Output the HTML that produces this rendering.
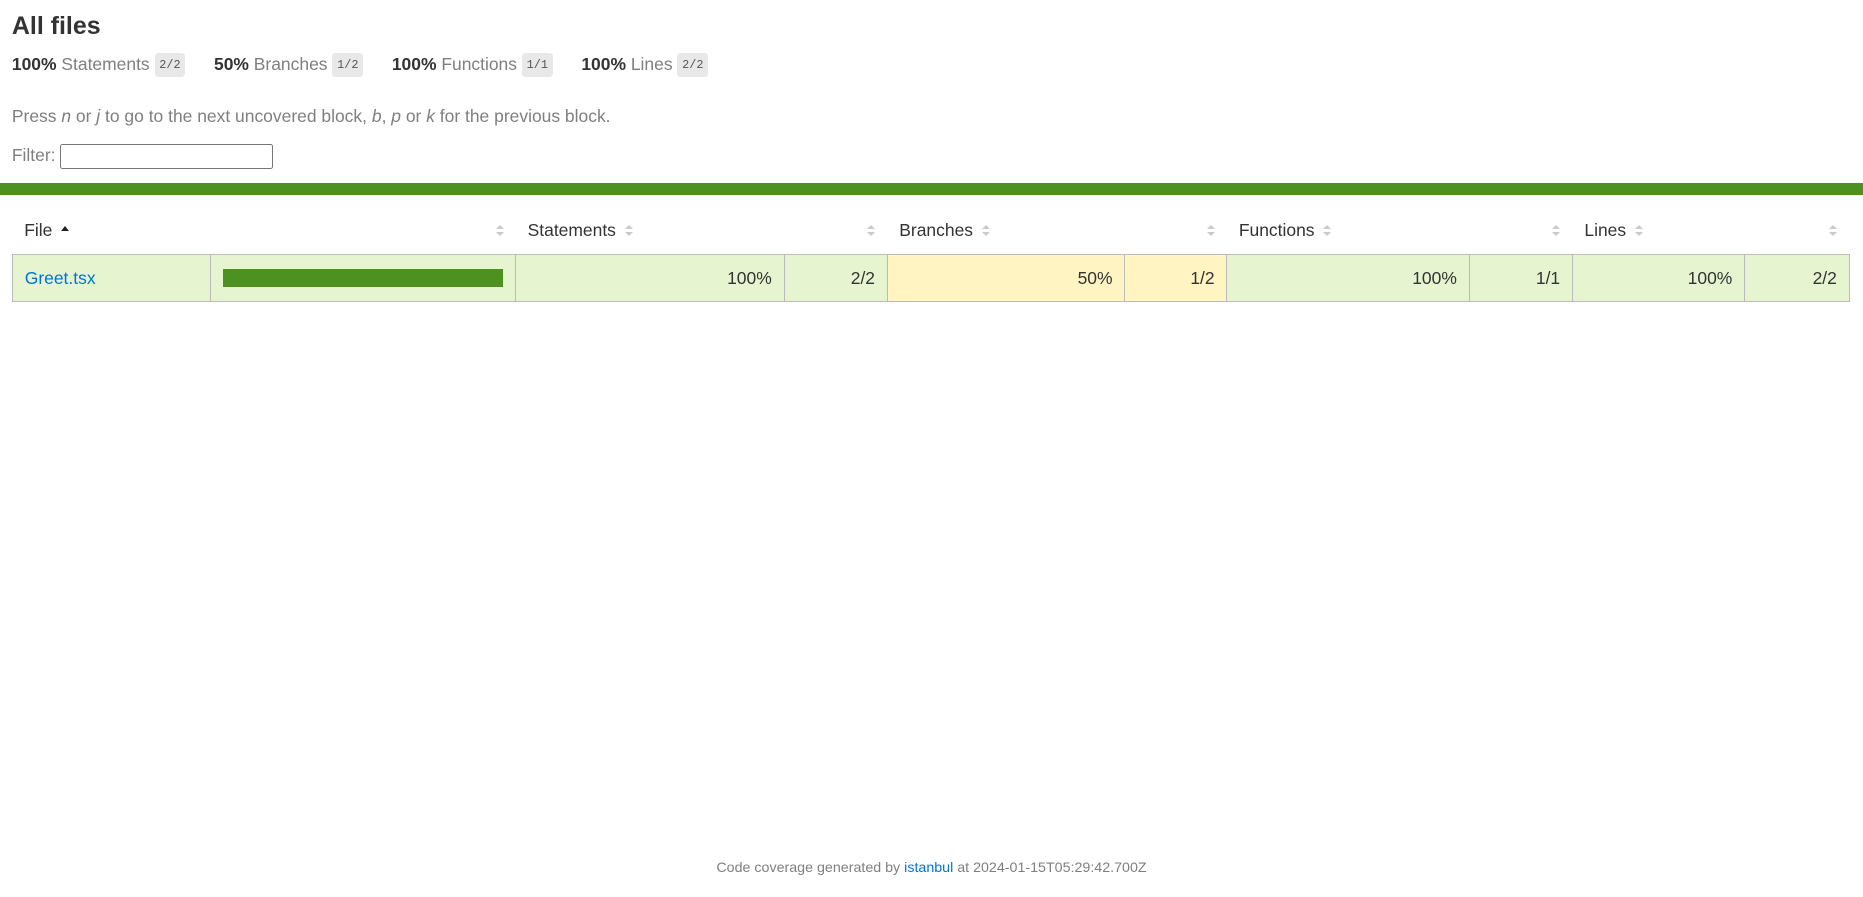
<!DOCTYPE html>
<html><head><meta charset="utf-8"><style>
html{zoom:1.188}
body{margin:0;padding:0;font-family:"Liberation Sans",Arial,sans-serif;font-size:14.7px;color:#333;height:751px;position:relative;background:#fff}
h1{font-size:21px;margin:0;line-height:1.2}
.pad1{padding:10px}
.quiet{color:#7f7f7f}
.strong{font-weight:bold}
.sum{margin-top:10px;height:20px}
.sum span.g{display:inline-block;margin-right:20px}
.fraction{font-family:"Liberation Mono",monospace;font-size:10px;color:#555;background:#E8E8E8;padding:4px 4px;border-radius:3px;vertical-align:middle}
p{margin:0}
.help{margin-top:24px}
.filter{margin-top:14px}
input{width:179px;border:1px solid #767676;border-radius:2px;padding:0 2px;margin:0;vertical-align:middle;box-sizing:border-box;height:21px}
.status-line{height:10px;background:#4d9221;margin-top:2px}
table{border-collapse:collapse;width:1547px;margin:0 10px}
th{text-align:left;font-weight:normal;white-space:nowrap;padding:10px;height:20px}
td{padding:10px;border-right:1px solid #bbb;height:19px}
td:last-child{border-right:none}
tbody{border:1px solid #bbb}
.r{text-align:right}
.high{background:rgb(230,245,208)}
.medium{background:#fff4c2}
a{color:#0074D9;text-decoration:none}
.so{display:inline-block;width:7px;height:10px;margin-left:.5em;position:relative;vertical-align:middle}
.so:before{content:"";position:absolute;left:0;top:0;border-left:3.5px solid transparent;border-right:3.5px solid transparent;border-bottom:4px solid #c6cbcc}
.so:after{content:"";position:absolute;left:0;top:6px;border-left:3.5px solid transparent;border-right:3.5px solid transparent;border-top:4px solid #c6cbcc}
.up{display:inline-block;margin-left:.5em;border-left:4px solid transparent;border-right:4px solid transparent;border-bottom:5px solid #222;vertical-align:middle;position:relative;top:-2px}
.bar{display:block;height:15px;background:#4d9221}
.footer{position:absolute;bottom:-4px;left:0;right:0;height:48px;text-align:center;font-size:12px;color:#7f7f7f;line-height:48px}
</style></head><body>
<div class="pad1">
<h1>All files</h1>
<div class="sum">
<span class="g"><span class="strong">100% </span><span class="quiet">Statements</span> <span class="fraction">2/2</span></span>
<span class="g"><span class="strong">50% </span><span class="quiet">Branches</span> <span class="fraction">1/2</span></span>
<span class="g"><span class="strong">100% </span><span class="quiet">Functions</span> <span class="fraction">1/1</span></span>
<span class="g"><span class="strong">100% </span><span class="quiet">Lines</span> <span class="fraction">2/2</span></span>
</div>
<p class="quiet help">Press <em>n</em> or <em>j</em> to go to the next uncovered block, <em>b</em>, <em>p</em> or <em>k</em> for the previous block.</p>
<div class="filter"><span class="quiet">Filter:</span> <input type="text"></div>
</div>
<div class="status-line"></div>
<div style="height:10px"></div>
<table>
<colgroup><col style="width:167px"><col style="width:257px"><col style="width:226px"><col style="width:87px"><col style="width:200px"><col style="width:86px"><col style="width:204px"><col style="width:87px"><col style="width:145px"><col style="width:88px"></colgroup>
<thead><tr>
<th>File<span class="up"></span></th>
<th class="r"><span class="so"></span></th>
<th>Statements<span class="so"></span></th>
<th class="r"><span class="so"></span></th>
<th>Branches<span class="so"></span></th>
<th class="r"><span class="so"></span></th>
<th>Functions<span class="so"></span></th>
<th class="r"><span class="so"></span></th>
<th>Lines<span class="so"></span></th>
<th class="r"><span class="so"></span></th>
</tr></thead>
<tbody><tr>
<td class="high"><a href="#">Greet.tsx</a></td>
<td class="high"><span class="bar"></span></td>
<td class="high r">100%</td>
<td class="high r">2/2</td>
<td class="medium r">50%</td>
<td class="medium r">1/2</td>
<td class="high r">100%</td>
<td class="high r">1/1</td>
<td class="high r">100%</td>
<td class="high r">2/2</td>
</tr></tbody>
</table>
<div class="footer">Code coverage generated by <a href="#">istanbul</a> at 2024-01-15T05:29:42.700Z</div>
</body></html>
